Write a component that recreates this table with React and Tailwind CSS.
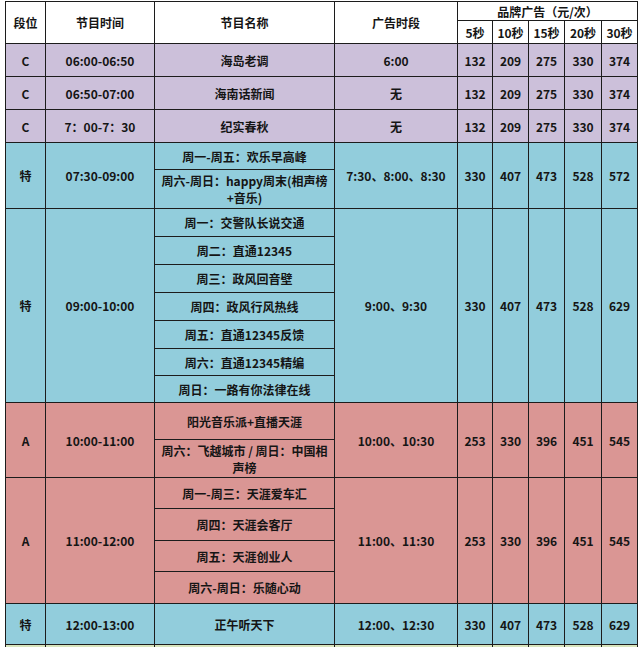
import React from "react";

const P = "bg-[#ccc0da]";
const B = "bg-[#92cddc]";
const R = "bg-[#da9694]";
const G = "bg-[#d8e4bc]";

const td = "border border-[#1c1c1c] text-center align-middle p-0 leading-[15px] whitespace-nowrap overflow-hidden";

function Prices({ v, bg, span = 1 }) {
  return v.map((n, i) => (
    <td key={i} rowSpan={span} className={`${td} ${bg}`}>
      {n}
    </td>
  ));
}

export default function App() {
  const c = [132, 209, 275, 330, 374];
  const t1 = [330, 407, 473, 528, 572];
  const t2 = [330, 407, 473, 528, 629];
  const a = [253, 330, 396, 451, 545];
  return (
    <div className="w-[640px] h-[647px] overflow-hidden bg-white pl-[5px] pt-px">
      <table
        className="table-fixed border-collapse w-[632px] text-[12px] font-bold text-[#151515]"
        style={{ fontFamily: '"Noto Sans CJK SC", "Noto Sans", sans-serif' }}
      >
        <colgroup>
          <col className="w-[40px]" />
          <col className="w-[109px]" />
          <col className="w-[180px]" />
          <col className="w-[123px]" />
          <col className="w-[35px]" />
          <col className="w-[36px]" />
          <col className="w-[36px]" />
          <col className="w-[37px]" />
          <col className="w-[36px]" />
        </colgroup>
        <tbody>
          <tr className="h-[19px] bg-white">
            <td rowSpan={2} className={td}>段位</td>
            <td rowSpan={2} className={td}>节目时间</td>
            <td rowSpan={2} className={td}>节目名称</td>
            <td rowSpan={2} className={td}>广告时段</td>
            <td colSpan={5} className={td}>品牌广告（元/次）</td>
          </tr>
          <tr className="h-[23px] bg-white">
            <td className={td}>5秒</td>
            <td className={td}>10秒</td>
            <td className={td}>15秒</td>
            <td className={td}>20秒</td>
            <td className={td}>30秒</td>
          </tr>

          <tr className="h-[33px]">
            <td className={`${td} ${P}`}>C</td>
            <td className={`${td} ${P}`}>06:00-06:50</td>
            <td className={`${td} ${P}`}>海岛老调</td>
            <td className={`${td} ${P}`}>6:00</td>
            <Prices v={c} bg={P} />
          </tr>
          <tr className="h-[33px]">
            <td className={`${td} ${P}`}>C</td>
            <td className={`${td} ${P}`}>06:50-07:00</td>
            <td className={`${td} ${P}`}>海南话新闻</td>
            <td className={`${td} ${P}`}>无</td>
            <Prices v={c} bg={P} />
          </tr>
          <tr className="h-[33px]">
            <td className={`${td} ${P}`}>C</td>
            <td className={`${td} ${P}`}>7：00-7：30</td>
            <td className={`${td} ${P}`}>纪实春秋</td>
            <td className={`${td} ${P}`}>无</td>
            <Prices v={c} bg={P} />
          </tr>

          <tr className="h-[27px]">
            <td rowSpan={2} className={`${td} ${B}`}>特</td>
            <td rowSpan={2} className={`${td} ${B}`}>07:30-09:00</td>
            <td className={`${td} ${B}`}>周一-周五：欢乐早高峰</td>
            <td rowSpan={2} className={`${td} ${B}`}>7:30、8:00、8:30</td>
            <Prices v={t1} bg={B} span={2} />
          </tr>
          <tr className="h-[39px]">
            <td className={`${td} ${B} leading-[17px]`}>
              周六-周日：happy周末(相声榜
              <br />
              +音乐)
            </td>
          </tr>

          <tr className="h-[28px]">
            <td rowSpan={7} className={`${td} ${B}`}>特</td>
            <td rowSpan={7} className={`${td} ${B}`}>09:00-10:00</td>
            <td className={`${td} ${B}`}>周一：交警队长说交通</td>
            <td rowSpan={7} className={`${td} ${B}`}>9:00、9:30</td>
            <Prices v={t2} bg={B} span={7} />
          </tr>
          <tr className="h-[28px]">
            <td className={`${td} ${B}`}>周二：直通12345</td>
          </tr>
          <tr className="h-[28px]">
            <td className={`${td} ${B}`}>周三：政风回音壁</td>
          </tr>
          <tr className="h-[28px]">
            <td className={`${td} ${B}`}>周四：政风行风热线</td>
          </tr>
          <tr className="h-[28px]">
            <td className={`${td} ${B}`}>周五：直通12345反馈</td>
          </tr>
          <tr className="h-[27px]">
            <td className={`${td} ${B}`}>周六：直通12345精编</td>
          </tr>
          <tr className="h-[27px]">
            <td className={`${td} ${B}`}>周日：一路有你法律在线</td>
          </tr>

          <tr className="h-[37px]">
            <td rowSpan={2} className={`${td} ${R}`}>A</td>
            <td rowSpan={2} className={`${td} ${R}`}>10:00-11:00</td>
            <td className={`${td} ${R}`}>阳光音乐派+直播天涯</td>
            <td rowSpan={2} className={`${td} ${R}`}>10:00、10:30</td>
            <Prices v={a} bg={R} span={2} />
          </tr>
          <tr className="h-[38px]">
            <td className={`${td} ${R} leading-[17px]`}>
              周六：飞越城市 / 周日：中国相
              <br />
              声榜
            </td>
          </tr>

          <tr className="h-[31px]">
            <td rowSpan={4} className={`${td} ${R}`}>A</td>
            <td rowSpan={4} className={`${td} ${R}`}>11:00-12:00</td>
            <td className={`${td} ${R}`}>周一-周三：天涯爱车汇</td>
            <td rowSpan={4} className={`${td} ${R}`}>11:00、11:30</td>
            <Prices v={a} bg={R} span={4} />
          </tr>
          <tr className="h-[32px]">
            <td className={`${td} ${R}`}>周四：天涯会客厅</td>
          </tr>
          <tr className="h-[31px]">
            <td className={`${td} ${R}`}>周五：天涯创业人</td>
          </tr>
          <tr className="h-[32px]">
            <td className={`${td} ${R}`}>周六-周日：乐随心动</td>
          </tr>

          <tr className="h-[41px]">
            <td className={`${td} ${B}`}>特</td>
            <td className={`${td} ${B}`}>12:00-13:00</td>
            <td className={`${td} ${B}`}>正午听天下</td>
            <td className={`${td} ${B}`}>12:00、12:30</td>
            <Prices v={t2} bg={B} />
          </tr>

          <tr className="h-[33px]">
            <td className={`${td} ${G}`}>&nbsp;</td>
            <td className={`${td} ${G}`}>&nbsp;</td>
            <td className={`${td} ${G}`}>&nbsp;</td>
            <td className={`${td} ${G}`}>&nbsp;</td>
            <Prices v={["", "", "", "", ""]} bg={G} />
          </tr>
        </tbody>
      </table>
    </div>
  );
}
